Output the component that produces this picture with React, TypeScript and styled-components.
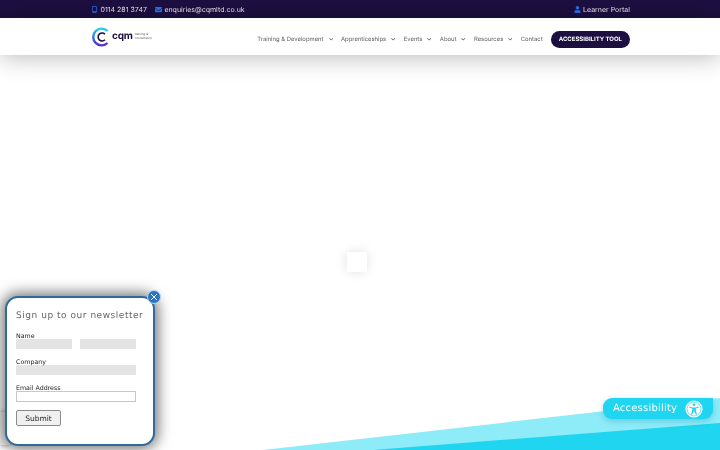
import React from "react";
import styled, { createGlobalStyle } from "styled-components";
import { FaUser, FaEnvelope, FaMobileAlt, FaChevronDown } from "react-icons/fa";

const GlobalStyle = createGlobalStyle`
  html, body {
    margin: 0;
    padding: 0;
    background: #ffffff;
    overflow: hidden;
    text-rendering: geometricPrecision;
  }
  * { box-sizing: border-box; }
`;

const Page = styled.div`
  width: 720px;
  height: 450px;
  display: flex;
  flex-direction: column;
  position: relative;
  overflow: hidden;
  background: #ffffff;
  font-family: Inter, "Liberation Sans", sans-serif;
  will-change: transform;
`;

const TopBar = styled.div`
  height: 18px;
  background: #1d0f40;
  padding: 0 90px 0 91px;
  display: flex;
  align-items: center;
  justify-content: space-between;
  color: #e6e3ee;
  font-size: 7px;
`;

const TopGroup = styled.div`
  display: flex;
  align-items: center;
  gap: 8px;
`;

const TopItem = styled.span`
  display: flex;
  align-items: center;
  gap: 2.5px;
  svg {
    color: #2f6fe8;
    font-size: 7px;
  }
`;

const Header = styled.header`
  height: 37px;
  background: #ffffff;
  padding: 0 90px 0 92px;
  display: flex;
  align-items: center;
  justify-content: space-between;
  box-shadow: 0 2px 24px rgba(0, 0, 0, 0.28);
  position: relative;
  z-index: 1;
`;

const Logo = styled.div`
  display: flex;
  align-items: center;
  gap: 2px;
`;

const LogoWord = styled.span`
  font-size: 10px;
  font-weight: 700;
  color: #1d0f40;
  letter-spacing: -0.2px;
  line-height: 1;
  margin-bottom: 1px;
`;

const LogoSmall = styled.span`
  font-size: 3px;
  line-height: 3.2px;
  width: 19px;
  color: #555555;
`;

const Nav = styled.nav`
  display: flex;
  align-items: center;
  gap: 8px;
  padding-top: 5px;
`;

const NavItem = styled.span`
  display: flex;
  align-items: center;
  gap: 5px;
  font-size: 5.9px;
  color: #5e5e5e;
  white-space: nowrap;
  svg {
    font-size: 4.5px;
    color: #555555;
  }
`;

const ToolButton = styled.span`
  height: 17px;
  padding: 0 8px;
  border-radius: 9px;
  background: #1d0f40;
  color: #ffffff;
  font-size: 6px;
  font-weight: 700;
  display: flex;
  align-items: center;
  white-space: nowrap;
`;

const Main = styled.main`
  flex: 1;
  display: flex;
  justify-content: center;
  padding: 197px 7px 0 0;
`;

const Loader = styled.div`
  width: 20px;
  height: 20px;
  background: #ffffff;
  box-shadow: 0 0 12px rgba(0, 0, 0, 0.12);
`;

const Waves = styled.svg`
  position: absolute;
  left: 0;
  bottom: 0;
  width: 720px;
  height: 60px;
`;

const AccessTab = styled.div`
  position: absolute;
  left: 603px;
  top: 398px;
  width: 110px;
  height: 21px;
  background: #1fd5f0;
  border-radius: 9px 0 9px 9px;
  box-shadow: 0 2px 6px rgba(0, 120, 160, 0.3);
  display: flex;
  align-items: center;
  justify-content: space-between;
  padding: 0 10px 0 10px;
  color: #ffffff;
  font-family: "DejaVu Sans", sans-serif;
  font-size: 10px;
  letter-spacing: 0.2px;
`;

const CaptchaEdge = styled.div`
  position: absolute;
  left: 0;
  top: 412px;
  width: 10px;
  height: 33px;
  background: #f4f4f4;
  box-shadow: 0 0 4px rgba(0, 0, 0, 0.4);
`;

const Popup = styled.div`
  position: absolute;
  left: 5px;
  top: 296px;
  width: 150px;
  height: 150px;
  background: #ffffff;
  border: 2px solid #2f6a9c;
  border-radius: 13px;
  box-shadow: 0 0 14px 3px rgba(0, 0, 0, 0.55);
  padding: 11px 9px 0 9px;
`;

const Close = styled.div`
  position: absolute;
  right: -8px;
  top: -8px;
  width: 14px;
  height: 14px;
  border-radius: 50%;
  background: #2b74c4;
  border: 1px solid #bcd6ee;
  display: flex;
  align-items: center;
  justify-content: center;
`;

const Title = styled.div`
  font-family: "DejaVu Sans", sans-serif;
  font-size: 9px;
  letter-spacing: 0.53px;
  color: #666666;
  white-space: nowrap;
  line-height: 14px;
  margin-bottom: 9px;
`;

const Field = styled.div`
  margin-bottom: 9px;
`;

const Label = styled.div`
  font-family: "DejaVu Sans", sans-serif;
  font-size: 6.3px;
  line-height: 9px;
  color: #222222;
  height: 7px;
`;

const Row = styled.div`
  display: flex;
  gap: 8px;
`;

const Input = styled.div<{ $width: number; $outlined?: boolean }>`
  width: ${(p) => p.$width}px;
  height: ${(p) => (p.$outlined ? 11 : 10)}px;
  background: ${(p) => (p.$outlined ? "#ffffff" : "#e4e4e4")};
  border: ${(p) => (p.$outlined ? "1px solid #c8c8c8" : "none")};
`;

const Submit = styled.div`
  width: 45px;
  height: 16px;
  background: #f0f0f0;
  border: 1px solid #8a8a8a;
  border-radius: 2px;
  font-family: "DejaVu Sans", sans-serif;
  font-size: 7.5px;
  color: #222222;
  display: flex;
  align-items: center;
  justify-content: center;
  margin-top: -1px;
`;

const navItems = [
  { label: "Training & Development", arrow: true },
  { label: "Apprenticeships", arrow: true },
  { label: "Events", arrow: true },
  { label: "About", arrow: true },
  { label: "Resources", arrow: true },
  { label: "Contact", arrow: false },
];

function LogoMark() {
  return (
    <svg width="18" height="20" viewBox="0 0 18 20">
      <defs>
        <linearGradient id="logoGrad" x1="0" y1="0" x2="0" y2="1">
          <stop offset="0" stopColor="#1fd5e8" />
          <stop offset="0.55" stopColor="#2f6fe8" />
          <stop offset="1" stopColor="#5b2bd0" />
        </linearGradient>
      </defs>
      <path d="M15.5 4 A8.4 8.4 0 1 0 15.5 16" fill="none" stroke="url(#logoGrad)" strokeWidth="2.4" />
      <path d="M13 7.2 A4 4 0 1 0 13 12.8" fill="none" stroke="#1d0f40" strokeWidth="1.6" />
    </svg>
  );
}

function AccessIcon() {
  return (
    <svg width="18" height="18" viewBox="0 0 18 18">
      <circle cx="9" cy="9" r="8.6" fill="#ffffff" />
      <circle cx="9" cy="9" r="7" fill="none" stroke="#1fd5f0" strokeWidth="0.7" />
      <circle cx="9" cy="4.8" r="1.3" fill="#1fd5f0" />
      <path d="M4.4 6.6 L7.4 7.4 H10.6 L13.6 6.6 L13.9 7.5 L10.8 8.6 V10.4 L12 14.4 L11 14.7 L9 10.9 L7 14.7 L6 14.4 L7.2 10.4 V8.6 L4.1 7.5 Z" fill="#1fd5f0" />
    </svg>
  );
}

export default function App() {
  return (
    <Page>
      <GlobalStyle />
      <TopBar>
        <TopGroup>
          <TopItem><FaMobileAlt /> 0114 281 3747</TopItem>
          <TopItem><FaEnvelope /> enquiries@cqmltd.co.uk</TopItem>
        </TopGroup>
        <TopItem><FaUser /> Learner Portal</TopItem>
      </TopBar>
      <Header>
        <Logo>
          <LogoMark />
          <LogoWord>cqm</LogoWord>
          <LogoSmall>training &amp; consultancy</LogoSmall>
        </Logo>
        <Nav>
          {navItems.map((item) => (
            <NavItem key={item.label}>
              {item.label}
              {item.arrow && <FaChevronDown />}
            </NavItem>
          ))}
          <ToolButton>ACCESSIBILITY TOOL</ToolButton>
        </Nav>
      </Header>
      <Main>
        <Loader />
      </Main>

      <Waves viewBox="0 0 720 60">
        <polygon points="263,60 720,8 720,60" fill="#8eecf9" />
        <polygon points="373,60 720,33 720,60" fill="#1fd5f0" />
      </Waves>
      <AccessTab>
        Accessibility
        <AccessIcon />
      </AccessTab>

      <CaptchaEdge />
      <Popup>
        <Close>
          <svg width="8" height="8" viewBox="0 0 8 8">
            <path d="M1 1 L7 7 M7 1 L1 7" stroke="#ffffff" strokeWidth="1" />
          </svg>
        </Close>
        <Title>Sign up to our newsletter</Title>
        <Field>
          <Label>Name</Label>
          <Row>
            <Input $width={56} />
            <Input $width={56} />
          </Row>
        </Field>
        <Field>
          <Label>Company</Label>
          <Input $width={120} />
        </Field>
        <Field>
          <Label>Email Address</Label>
          <Input $width={120} $outlined />
        </Field>
        <Submit>Submit</Submit>
      </Popup>
    </Page>
  );
}
